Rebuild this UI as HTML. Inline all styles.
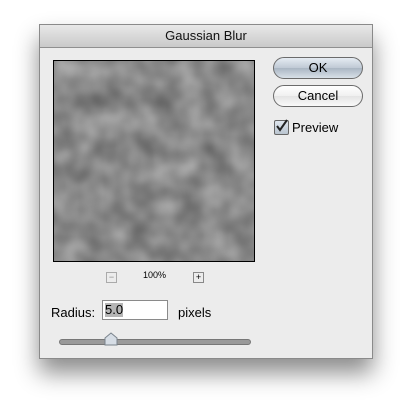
<!DOCTYPE html>
<html><head><style>
body{margin:0;width:412px;height:413px;background:#fff;position:relative;overflow:hidden;font-family:"Liberation Sans",sans-serif}
.dlg{position:absolute;left:39px;top:24px;width:332px;height:333px;background:#ececec;border:1px solid #8a8a8a;box-shadow:0 14px 22px rgba(0,0,0,.45)}
.title{height:22px;background:linear-gradient(#e8e8e8,#c9c9c9);border-bottom:1px solid #8f8f8f;text-align:center;font-size:13px;line-height:22px;color:#111}
.prev{position:absolute;left:13px;top:35px;width:200px;height:200px;border:1px solid #000;overflow:hidden;background:#888}
.btn{position:absolute;left:233px;width:88px;height:20px;border:1px solid #6b6b6b;border-radius:11px;text-align:center;font-size:13px;line-height:20px;color:#000}
.ok{top:32px;background:linear-gradient(#e6ecf3,#bfc9d4 50%,#aab6c3 51%,#d8e0e8)}
.cancel{top:60px;background:linear-gradient(#fff,#f0f0f0 50%,#e4e4e4 51%,#fafafa)}
.cb{position:absolute;left:234px;top:95px;width:13px;height:13px;border:1px solid #666;background:linear-gradient(#dfe6ee,#b9c4cf);border-radius:2px}
.t{position:absolute;font-size:13px;color:#000}
.sm{position:absolute;width:9px;height:9px;border:1px solid #888;font-size:9px;line-height:9px;text-align:center}
</style></head><body>
<div class="dlg">
<div class="title">Gaussian Blur</div>
<div class="prev"><svg width="200" height="200"><filter id="g" color-interpolation-filters="sRGB"><feTurbulence type="fractalNoise" baseFrequency="0.04" numOctaves="2" seed="5"/><feColorMatrix type="matrix" values="0.35 0 0 0 0.36 0.35 0 0 0 0.36 0.35 0 0 0 0.36 0 0 0 0 1"/></filter><rect width="200" height="200" filter="url(#g)"/></svg></div>
<div class="btn ok">OK</div>
<div class="btn cancel">Cancel</div>
<div class="cb"><svg width="13" height="13" style="position:absolute;left:0;top:-2px"><path d="M2 7 L5 11 L12 1" stroke="#222" stroke-width="2" fill="none"/></svg></div>
<div class="t" style="left:252px;top:95px">Preview</div>
<div class="sm" style="left:66px;top:247px;color:#888;border-color:#aaa">−</div>
<div class="t" style="left:103px;top:245px;font-size:9px">100%</div>
<div class="sm" style="left:153px;top:247px;color:#000">+</div>
<div class="t" style="left:11px;top:280px">Radius:</div>
<div style="position:absolute;left:62px;top:275px;width:64px;height:18px;background:#fff;border:1px solid #8a8a8a"><span style="position:absolute;left:2px;top:2px;background:#b5b5b5;font-size:13px;line-height:14px">5.0</span></div>
<div class="t" style="left:138px;top:280px">pixels</div>
<div style="position:absolute;left:19px;top:314px;width:190px;height:4px;background:#9a9a9a;border:1px solid #777;border-radius:3px"></div>
<svg style="position:absolute;left:64px;top:307px" width="14" height="15"><path d="M1 6 L7 1 L13 6 L13 13 L1 13 Z" fill="#d6dde5" stroke="#7a838c"/></svg>
</div>
</body></html>
